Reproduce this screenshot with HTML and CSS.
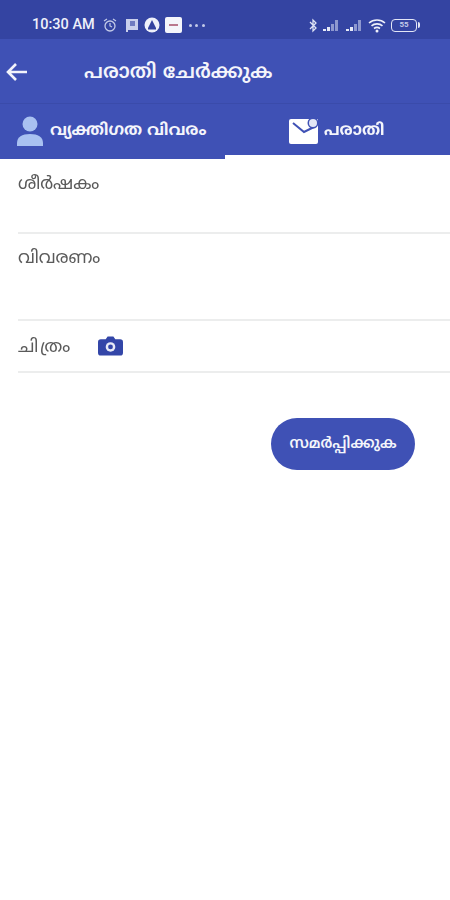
FILE: index.html
```html
<!DOCTYPE html>
<html lang="ml">
<head>
<meta charset="utf-8">
<title>പരാതി ചേർക്കുക</title>
<link rel="stylesheet" href="styles.css">
</head>
<body>
<div class="phone">
  <header class="status">
    <div class="status-left">
      <span class="time">10:30 AM</span>
      <svg class="si" width="16" height="16" viewBox="0 0 16 16"><circle cx="8" cy="9" r="5" fill="none" stroke="#c3cae8" stroke-width="1.3"/><path d="M2 4l3-2M14 4l-3-2M8 6v3l2 1" fill="none" stroke="#c3cae8" stroke-width="1.2"/></svg>
      <svg class="si" width="14" height="15" viewBox="0 0 14 15"><path d="M1 1h12v11H3v2H1z" fill="#c9cfec"/><path d="M5 3h5v5H5z" fill="#6f7bc0"/></svg>
      <svg class="si si-tight" width="16" height="16" viewBox="0 0 16 16"><circle cx="8" cy="8" r="7.500" fill="#eef0fa"/><path d="M8 3l4 8H4z" fill="#33419f"/><path d="M4 11h8v1.500H4z" fill="#33419f"/></svg>
      <svg class="si si-tight" width="17" height="16" viewBox="0 0 17 16"><rect width="17" height="16" rx="2" fill="#f4f5fb"/><rect x="4" y="7" width="9" height="2" fill="#b9788e"/></svg>
      <span class="dots"><i></i><i></i><i></i></span>
    </div>
    <div class="status-right">
      <svg width="8" height="15" viewBox="0 0 8 15"><path d="M1 4l6 6-3 3V2l3 3-6 6" fill="none" stroke="#dfe3f5" stroke-width="1.300"/></svg>
      <svg class="sig" width="18" height="14" viewBox="0 0 18 14"><path d="M1 11h3v2H1zM5 9h3v4H5z" fill="#e6e9f7"/><path d="M9 6h3v7H9zM13 2h3v11h-3z" fill="#8e98cf"/></svg>
      <svg class="sig" width="18" height="14" viewBox="0 0 18 14"><path d="M1 11h3v2H1zM5 9h3v4H5z" fill="#e6e9f7"/><path d="M9 6h3v7H9zM13 2h3v11h-3z" fill="#8e98cf"/></svg>
      <svg width="18" height="15" viewBox="0 0 18 15"><path d="M1 5c4.500-4 11.500-4 16 0M3.500 7.800c3-2.600 8-2.600 11 0M6 10.500c1.800-1.400 4.200-1.400 6 0" fill="none" stroke="#eef0fa" stroke-width="1.600"/><circle cx="9" cy="13" r="1.500" fill="#eef0fa"/></svg>
      <span class="battery"><span class="battery-num">55</span></span>
    </div>
  </header>

  <div class="appbar">
    <svg class="back" width="24" height="20" viewBox="0 0 24 20"><path d="M22 10H3M11 2l-8 8 8 8" fill="none" stroke="#f2f3fb" stroke-width="2.600"/></svg>
    <h1 class="title">പരാതി ചേർക്കുക</h1>
  </div>

  <nav class="tabs">
    <div class="tab">
      <svg width="28" height="30" viewBox="0 0 28 30"><circle cx="14" cy="8" r="7.500" fill="#a9c1f1"/><path d="M1 30v-3c0-6 5-9 13-9s13 3 13 9v3z" fill="#a9c1f1"/></svg>
      <span class="tab-label">വ്യക്തിഗത വിവരം</span>
    </div>
    <div class="tab tab-active">
      <svg width="30" height="26" viewBox="0 0 30 26"><path d="M3 1h26a1 1 0 0 1 1 1v22a2 2 0 0 1-2 2H3a2 2 0 0 1-2-2V3a2 2 0 0 1 2-2z" fill="#fff"/><path d="M5 5l11 9 10-5" fill="none" stroke="#3f51b5" stroke-width="2"/><circle cx="25" cy="5" r="5.500" fill="#3f51b5"/><circle cx="25" cy="5" r="4" fill="#e3e6f5"/></svg>
      <span class="tab-label">പരാതി</span>
    </div>
  </nav>

  <main class="form">
    <div class="field field-title"><span class="label">ശീർഷകം</span></div>
    <div class="field field-desc"><span class="label">വിവരണം</span></div>
    <div class="field field-image">
      <span class="label label-wide">ചിത്രം</span>
      <svg width="25" height="20" viewBox="0 0 26 20"><path d="M3 3h5l2-3h6l2 3h5a3 3 0 0 1 3 3v11a3 3 0 0 1-3 3H3a3 3 0 0 1-3-3V6a3 3 0 0 1 3-3z" fill="#3346a8"/><circle cx="13" cy="11" r="5" fill="#e8ebf7"/><circle cx="13" cy="11" r="2.500" fill="#3346a8"/></svg>
    </div>
    <div class="actions">
      <button class="submit" type="button">സമർപ്പിക്കുക</button>
    </div>
  </main>
</div>
</body>
</html>
```

FILE: styles.css
```css
* { box-sizing: border-box; }
html, body { margin: 0; padding: 0; background: #fff; }
body { font-family: "Noto Sans Malayalam", "Noto Sans", "Roboto", sans-serif; }
.phone { width: 450px; height: 900px; overflow: hidden; display: flex; flex-direction: column; filter: blur(0.5px); }

.status {
  height: 39px;
  background: #3444a2;
  color: #eef0fa;
  display: flex;
  align-items: center;
  justify-content: space-between;
  padding: 11px 30px 0 32px;
}
.status-left, .status-right { display: flex; align-items: center; }
.status-left { gap: 7px; }
.status-right { gap: 5px; }
.si-tight { margin-left: -2px; }
.time { font: 500 14.500px/1 "Roboto", sans-serif; }
.dots { display: flex; gap: 3.500px; }
.dots i { width: 3px; height: 3px; border-radius: 50%; background: #c3cae8; }
.battery {
  width: 26px; height: 13px; border: 1.500px solid #e3e6f6; border-radius: 4px;
  font: 700 8px/10px "Roboto", sans-serif; text-align: center; color: #c3cae8;
  position: relative; margin-right: 3px;
}
.battery::after {
  content: ""; position: absolute; right: -4px; top: 2px; width: 2px; height: 6px;
  background: #e3e6f6; border-radius: 0 2px 2px 0;
}

.appbar {
  height: 65px;
  background: #3f51b5;
  display: flex;
  align-items: center;
  padding: 2px 0 0 5px;
  border-bottom: 1px solid #3a4baa;
  flex-shrink: 0;
}
.title {
  margin: 2px 0 0 55px;
  font-size: 20px;
  font-weight: 600;
  color: #f4f5fb;
  white-space: nowrap;
}

.tabs {
  height: 55px;
  background: #3f51b5;
  display: flex;
  flex-shrink: 0;
}
.tab {
  flex: 0 0 50%;
  min-width: 0;
  display: flex;
  align-items: center;
  gap: 6px;
  padding: 3px 0 0 16px;
  border-bottom: 4px solid transparent;
}
.tab-active {
  padding-left: 63px;
  border-bottom-color: #fff;
}
.tab-label { font-size: 16px; font-weight: 700; color: #f4f5fb; white-space: nowrap; }

.form { padding: 0 0 0 18px; flex: 1; }
.field { border-bottom: 2px solid #eceded; }
.label { font-size: 17.500px; color: #5a5a5a; line-height: 24px; }
.label-wide { letter-spacing: 2px; margin-top: 4px; }
.field-title { height: 75px; padding-top: 14px; }
.field-desc { height: 87px; padding-top: 13px; }
.field-image {
  height: 52px;
  display: flex;
  align-items: center;
  gap: 26px;
}
.actions { display: flex; justify-content: flex-end; padding: 45px 35px 0 0; }
.submit {
  width: 144px;
  height: 52px;
  border: 0;
  border-radius: 26px;
  background: #3f51b5;
  color: #f4f5fb;
  font-family: inherit;
  font-size: 15px;
  font-weight: 600;
}
```
